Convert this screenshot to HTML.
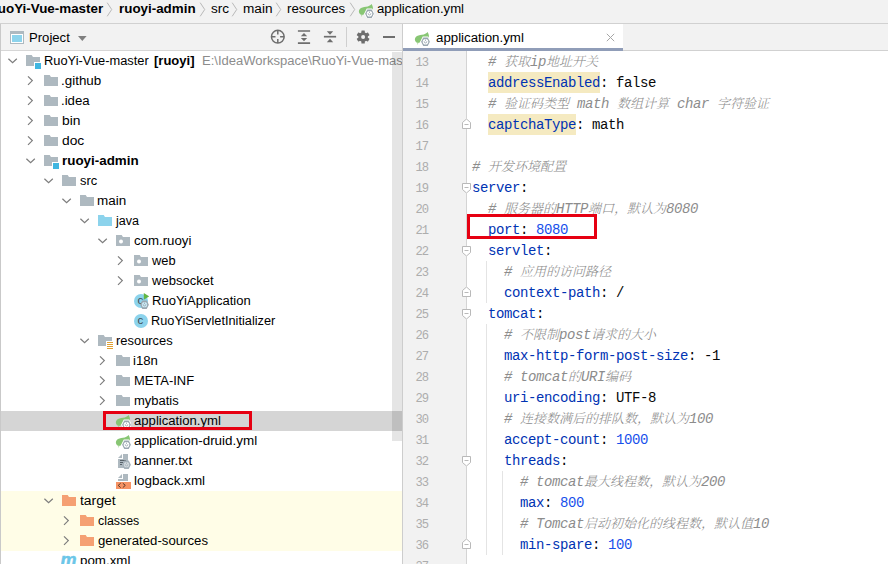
<!DOCTYPE html>
<html><head><meta charset="utf-8"><title>application.yml</title>
<style>
html,body{margin:0;padding:0;}
body{width:888px;height:564px;overflow:hidden;background:#fff;position:relative;font-family:"Liberation Sans", "Noto Sans CJK SC", sans-serif;font-size:12px;color:#000;}
#crumbs{position:absolute;left:0;top:0;width:888px;height:23px;background:#f2f2f2;border-bottom:1px solid #d1d1d1;}
#crumbs span.t{position:absolute;top:0;line-height:19px;white-space:nowrap;transform-origin:0 0;}
.bsep{position:absolute;top:0;}
#lborder{position:absolute;left:0;top:24px;width:1px;height:540px;background:#c9c9c9;}
#phead{position:absolute;left:1px;top:24px;width:401px;height:26px;background:#f2f2f2;border-bottom:1px solid #d6d6d6;}
#tree{position:absolute;left:0px;top:0;width:402px;height:564px;overflow:hidden;}
.row{position:absolute;left:0;width:402px;height:20px;line-height:20px;white-space:nowrap;}
.row .arr{position:absolute;top:0;}
.row .ico{position:absolute;top:2px;width:16px;height:16px;}
.row .ico svg{display:block;}
.row .lbl{position:absolute;top:0px;transform-origin:0 0;}
.path{color:#8c8c8c;}
#split{position:absolute;left:402px;top:24px;width:1px;height:540px;background:#cdcdcd;}
#thumb{position:absolute;left:392px;top:52px;width:10px;height:388.500px;background:rgba(0,0,0,.1);}
#tabs{position:absolute;left:403px;top:24px;width:485px;height:26px;background:#f2f2f2;border-bottom:1px solid #d1d1d1;}
#tab{position:absolute;left:403px;top:24px;width:220px;height:24px;background:#fff;border-bottom:3px solid #909db8;}
#gutter{position:absolute;left:403px;top:51px;width:63px;height:513px;background:#f2f2f2;border-right:1px solid #d4d4d4;}
#editor{position:absolute;left:0;top:0;width:888px;height:564px;font-family:"Liberation Mono", "Noto Serif CJK SC", monospace;font-size:14px;letter-spacing:-0.4px;-webkit-text-stroke-width:0;}
.ln{position:absolute;left:403px;width:25px;text-align:right;height:21px;line-height:21px;color:#adadad;letter-spacing:-1.100px;font-size:13.500px;transform:scaleX(.9);transform-origin:100% 50%;}
.cl{position:absolute;height:21px;line-height:21px;white-space:pre;color:#080808;}
.c{color:#8c8c8c;font-style:italic;}
.z{font-size:13px;font-weight:300;letter-spacing:0;}
.k{color:#0033b3;}
.hlb{position:absolute;height:21px;background:#f5eac1;}
.n{color:#1750eb;}
.guide{position:absolute;width:1px;background:#e4e4e4;}
.redbox{position:absolute;border:3px solid #e60012;box-sizing:border-box;}
</style></head><body>
<div id="crumbs">
<span class="t" style="right:784.8px;transform:scaleX(1.1152);transform-origin:100% 0;font-weight:bold">RuoYi-Vue-master</span><svg class="bsep" style="left:106px" width="8" height="24" viewBox="0 0 8 24"><path d="M1.200 2.700L5.700 9.500 1.200 16.300" fill="none" stroke="#b9b9b9" stroke-width="1"/></svg>
<span class="t" style="left:119px;transform:scaleX(1.1152);font-weight:bold;">ruoyi-admin</span><svg class="bsep" style="left:199px" width="8" height="24" viewBox="0 0 8 24"><path d="M1.200 2.700L5.700 9.500 1.200 16.300" fill="none" stroke="#b9b9b9" stroke-width="1"/></svg>
<span class="t" style="left:211px;transform:scaleX(1.1309);">src</span><svg class="bsep" style="left:231px" width="8" height="24" viewBox="0 0 8 24"><path d="M1.200 2.700L5.700 9.500 1.200 16.300" fill="none" stroke="#b9b9b9" stroke-width="1"/></svg>
<span class="t" style="left:243px;transform:scaleX(1.1341);">main</span><svg class="bsep" style="left:275px" width="8" height="24" viewBox="0 0 8 24"><path d="M1.200 2.700L5.700 9.500 1.200 16.300" fill="none" stroke="#b9b9b9" stroke-width="1"/></svg>
<span class="t" style="left:287px;transform:scaleX(1.1049);">resources</span><svg class="bsep" style="left:349px" width="8" height="24" viewBox="0 0 8 24"><path d="M1.200 2.700L5.700 9.500 1.200 16.300" fill="none" stroke="#b9b9b9" stroke-width="1"/></svg>
<span style="position:absolute;left:358px;top:2px"><svg width="16" height="16" viewBox="0 0 16 16"><path d="M13.600 1.900C12.400 3.400 10.500 4.300 8 4.700 5.500 5.100 3.200 5.400 1.800 7 .5 8.600.600 10.600 1.900 11.900c1.100 1.100 2.700 1.100 3.700.600C6.800 11.800 7 10.500 8 9.500h7v-3c0-2-.800-3.500-1.400-4.600z" fill="#88c674"/><path d="M4.700 12.300l-1 2.200-.8-.3 1-2.200z" fill="#88c674" opacity=".6"/><g><path d="M16.900 11.700l-2.650 5.100h-5.500L6.100 11.700l2.650-5.100h5.500z" fill="#fff"/><path d="M15.900 11.700l-2.200 4.200H9.300L7.100 11.700l2.200-4.200h4.400z" fill="#9aa7b0"/><circle cx="11.500" cy="11.700" r="2.800" fill="#fff"/><path d="M10.150 11.300a1.350 1.700 0 0 0 2.700 0M11.500 9.500v1.400" fill="none" stroke="#9aa7b0" stroke-width=".9"/></g></svg></span>
<span class="t" style="left:377px;transform:scaleX(1.0964);">application.yml</span>
</div>
<div id="tree">
<div class="row" style="top:51px;">
<svg class="arr" style="left:6.5px" width="12" height="20" viewBox="0 0 12 20"><path d="M1.400 7.700l4.200 4 4.200-4" fill="none" stroke="#7d7d7d" stroke-width="1.200"/></svg>
<span class="ico" style="left:25px"><svg width="16" height="16" viewBox="0 0 16 16"><path d="M1 2h5.700l1.280 2H15v5H9v4H1z" fill="#aeb9c0"/><rect x="10" y="10" width="6" height="6" fill="#40b6e0"/></svg></span>
<span class="lbl " style="left:44px;transform:scaleX(1.0708);">RuoYi-Vue-master</span>
<span class="lbl " style="left:154px;transform:scaleX(1.084);font-weight:bold;">[ruoyi]</span>
<span class="lbl path" style="left:201.6px;transform:scaleX(1.0859);">E:\IdeaWorkspace\RuoYi-Vue-mas</span>
</div>
<div class="row" style="top:71px;">
<svg class="arr" style="left:24.5px" width="12" height="20" viewBox="0 0 12 20"><path d="M3 5.300l4.300 4.300L3 13.900" fill="none" stroke="#7d7d7d" stroke-width="1.200"/></svg>
<span class="ico" style="left:43px"><svg width="16" height="16" viewBox="0 0 16 16"><path d="M1 2h5.700l1.280 2H15v9H1z" fill="#aeb9c0"/></svg></span>
<span class="lbl " style="left:61px;transform:scaleX(1.1173);">.github</span>
</div>
<div class="row" style="top:91px;">
<svg class="arr" style="left:24.5px" width="12" height="20" viewBox="0 0 12 20"><path d="M3 5.300l4.300 4.300L3 13.900" fill="none" stroke="#7d7d7d" stroke-width="1.200"/></svg>
<span class="ico" style="left:43px"><svg width="16" height="16" viewBox="0 0 16 16"><path d="M1 2h5.700l1.280 2H15v9H1z" fill="#aeb9c0"/></svg></span>
<span class="lbl " style="left:61px;transform:scaleX(1.1001);">.idea</span>
</div>
<div class="row" style="top:111px;">
<svg class="arr" style="left:24.5px" width="12" height="20" viewBox="0 0 12 20"><path d="M3 5.300l4.300 4.300L3 13.900" fill="none" stroke="#7d7d7d" stroke-width="1.200"/></svg>
<span class="ico" style="left:43px"><svg width="16" height="16" viewBox="0 0 16 16"><path d="M1 2h5.700l1.280 2H15v9H1z" fill="#aeb9c0"/></svg></span>
<span class="lbl " style="left:62px;transform:scaleX(1.1515);">bin</span>
</div>
<div class="row" style="top:131px;">
<svg class="arr" style="left:24.5px" width="12" height="20" viewBox="0 0 12 20"><path d="M3 5.300l4.300 4.300L3 13.900" fill="none" stroke="#7d7d7d" stroke-width="1.200"/></svg>
<span class="ico" style="left:43px"><svg width="16" height="16" viewBox="0 0 16 16"><path d="M1 2h5.700l1.280 2H15v9H1z" fill="#aeb9c0"/></svg></span>
<span class="lbl " style="left:62px;transform:scaleX(1.1507);">doc</span>
</div>
<div class="row" style="top:151px;">
<svg class="arr" style="left:24.5px" width="12" height="20" viewBox="0 0 12 20"><path d="M1.400 7.700l4.200 4 4.200-4" fill="none" stroke="#7d7d7d" stroke-width="1.200"/></svg>
<span class="ico" style="left:43px"><svg width="16" height="16" viewBox="0 0 16 16"><path d="M1 2h5.700l1.280 2H15v5H9v4H1z" fill="#aeb9c0"/><rect x="10" y="10" width="6" height="6" fill="#40b6e0"/></svg></span>
<span class="lbl " style="left:62px;transform:scaleX(1.1157);font-weight:bold;">ruoyi-admin</span>
</div>
<div class="row" style="top:171px;">
<svg class="arr" style="left:42.5px" width="12" height="20" viewBox="0 0 12 20"><path d="M1.400 7.700l4.200 4 4.200-4" fill="none" stroke="#7d7d7d" stroke-width="1.200"/></svg>
<span class="ico" style="left:61px"><svg width="16" height="16" viewBox="0 0 16 16"><path d="M1 2h5.700l1.280 2H15v9H1z" fill="#aeb9c0"/></svg></span>
<span class="lbl " style="left:80px;transform:scaleX(1.075);">src</span>
</div>
<div class="row" style="top:191px;">
<svg class="arr" style="left:60.5px" width="12" height="20" viewBox="0 0 12 20"><path d="M1.400 7.700l4.200 4 4.200-4" fill="none" stroke="#7d7d7d" stroke-width="1.200"/></svg>
<span class="ico" style="left:79px"><svg width="16" height="16" viewBox="0 0 16 16"><path d="M1 2h5.700l1.280 2H15v9H1z" fill="#aeb9c0"/></svg></span>
<span class="lbl " style="left:97px;transform:scaleX(1.1219);">main</span>
</div>
<div class="row" style="top:211px;">
<svg class="arr" style="left:78.5px" width="12" height="20" viewBox="0 0 12 20"><path d="M1.400 7.700l4.200 4 4.200-4" fill="none" stroke="#7d7d7d" stroke-width="1.200"/></svg>
<span class="ico" style="left:97px"><svg width="16" height="16" viewBox="0 0 16 16"><path d="M1 2h5.700l1.280 2H15v9H1z" fill="#8cd3ec"/></svg></span>
<span class="lbl " style="left:116px;transform:scaleX(1.0469);">java</span>
</div>
<div class="row" style="top:231px;">
<svg class="arr" style="left:96.5px" width="12" height="20" viewBox="0 0 12 20"><path d="M1.400 7.700l4.200 4 4.200-4" fill="none" stroke="#7d7d7d" stroke-width="1.200"/></svg>
<span class="ico" style="left:115px"><svg width="16" height="16" viewBox="0 0 16 16"><path d="M1 2h5.700l1.280 2H15v9H1z" fill="#aeb9c0"/><circle cx="6" cy="8.500" r="2" fill="#fff"/></svg></span>
<span class="lbl " style="left:134px;transform:scaleX(1.1031);">com.ruoyi</span>
</div>
<div class="row" style="top:251px;">
<svg class="arr" style="left:114.5px" width="12" height="20" viewBox="0 0 12 20"><path d="M3 5.300l4.300 4.300L3 13.900" fill="none" stroke="#7d7d7d" stroke-width="1.200"/></svg>
<span class="ico" style="left:133px"><svg width="16" height="16" viewBox="0 0 16 16"><path d="M1 2h5.700l1.280 2H15v9H1z" fill="#aeb9c0"/><circle cx="6" cy="8.500" r="2" fill="#fff"/></svg></span>
<span class="lbl " style="left:152px;transform:scaleX(1.0703);">web</span>
</div>
<div class="row" style="top:271px;">
<svg class="arr" style="left:114.5px" width="12" height="20" viewBox="0 0 12 20"><path d="M3 5.300l4.300 4.300L3 13.900" fill="none" stroke="#7d7d7d" stroke-width="1.200"/></svg>
<span class="ico" style="left:133px"><svg width="16" height="16" viewBox="0 0 16 16"><path d="M1 2h5.700l1.280 2H15v9H1z" fill="#aeb9c0"/><circle cx="6" cy="8.500" r="2" fill="#fff"/></svg></span>
<span class="lbl " style="left:152px;transform:scaleX(1.0855);">websocket</span>
</div>
<div class="row" style="top:291px;">
<span class="ico" style="left:133px"><svg width="16" height="16" viewBox="0 0 16 16"><circle cx="8" cy="8" r="7" fill="#8cd3ec"/><text x="7.4" y="11" font-family='"Liberation Sans", sans-serif' font-size="11.500" fill="#3f4a52" text-anchor="middle">c</text><path d="M10.800 0l5.300 3.400-5.300 3.400z" fill="#62b543"/><g><path d="M15.900 11.700l-2.200 4.200H9.300L7.100 11.700l2.200-4.200h4.400z" fill="#9aa7b0"/><circle cx="11.500" cy="11.700" r="2.650" fill="#c9eaf6"/><path d="M10.150 11.300a1.350 1.700 0 0 0 2.700 0M11.500 9.500v1.400" fill="none" stroke="#9aa7b0" stroke-width=".9"/></g></svg></span>
<span class="lbl " style="left:152px;transform:scaleX(1.0851);">RuoYiApplication</span>
</div>
<div class="row" style="top:311px;">
<span class="ico" style="left:133px"><svg width="16" height="16" viewBox="0 0 16 16"><circle cx="8" cy="8" r="7" fill="#8cd3ec"/><text x="7.4" y="11" font-family='"Liberation Sans", sans-serif' font-size="11.500" fill="#3f4a52" text-anchor="middle">c</text></svg></span>
<span class="lbl " style="left:151px;transform:scaleX(1.0626);">RuoYiServletInitializer</span>
</div>
<div class="row" style="top:331px;">
<svg class="arr" style="left:78.5px" width="12" height="20" viewBox="0 0 12 20"><path d="M1.400 7.700l4.200 4 4.200-4" fill="none" stroke="#7d7d7d" stroke-width="1.200"/></svg>
<span class="ico" style="left:97px"><svg width="16" height="16" viewBox="0 0 16 16"><path d="M1 2h5.700l1.280 2H15v4H9v5H1z" fill="#aeb9c0"/><g fill="#e0a135"><rect x="10" y="9" width="6" height="1"/><rect x="10" y="11" width="6" height="1"/><rect x="10" y="13" width="6" height="1"/><rect x="10" y="15" width="6" height="1"/></g></svg></span>
<span class="lbl " style="left:116px;transform:scaleX(1.0766);">resources</span>
</div>
<div class="row" style="top:351px;">
<svg class="arr" style="left:96.5px" width="12" height="20" viewBox="0 0 12 20"><path d="M3 5.300l4.300 4.300L3 13.900" fill="none" stroke="#7d7d7d" stroke-width="1.200"/></svg>
<span class="ico" style="left:115px"><svg width="16" height="16" viewBox="0 0 16 16"><path d="M1 2h5.700l1.280 2H15v9H1z" fill="#aeb9c0"/></svg></span>
<span class="lbl " style="left:133px;transform:scaleX(1.0982);">i18n</span>
</div>
<div class="row" style="top:371px;">
<svg class="arr" style="left:96.5px" width="12" height="20" viewBox="0 0 12 20"><path d="M3 5.300l4.300 4.300L3 13.900" fill="none" stroke="#7d7d7d" stroke-width="1.200"/></svg>
<span class="ico" style="left:115px"><svg width="16" height="16" viewBox="0 0 16 16"><path d="M1 2h5.700l1.280 2H15v9H1z" fill="#aeb9c0"/></svg></span>
<span class="lbl " style="left:134px;transform:scaleX(1.0774);">META-INF</span>
</div>
<div class="row" style="top:391px;">
<svg class="arr" style="left:96.5px" width="12" height="20" viewBox="0 0 12 20"><path d="M3 5.300l4.300 4.300L3 13.900" fill="none" stroke="#7d7d7d" stroke-width="1.200"/></svg>
<span class="ico" style="left:115px"><svg width="16" height="16" viewBox="0 0 16 16"><path d="M1 2h5.700l1.280 2H15v9H1z" fill="#aeb9c0"/></svg></span>
<span class="lbl " style="left:134px;transform:scaleX(1.0806);">mybatis</span>
</div>
<div class="row" style="top:411px;background:#d5d5d5;">
<span class="ico" style="left:115px"><svg width="16" height="16" viewBox="0 0 16 16"><path d="M13.600 1.900C12.400 3.400 10.500 4.300 8 4.700 5.500 5.100 3.200 5.400 1.800 7 .5 8.600.600 10.600 1.900 11.900c1.100 1.100 2.700 1.100 3.700.600C6.800 11.800 7 10.500 8 9.500h7v-3c0-2-.800-3.500-1.400-4.600z" fill="#88c674"/><path d="M4.700 12.300l-1 2.200-.8-.3 1-2.200z" fill="#88c674" opacity=".6"/><g><path d="M16.900 11.700l-2.650 5.100h-5.500L6.100 11.700l2.650-5.100h5.500z" fill="#fff"/><path d="M15.900 11.700l-2.200 4.200H9.300L7.100 11.700l2.200-4.200h4.400z" fill="#9aa7b0"/><circle cx="11.500" cy="11.700" r="2.800" fill="#fff"/><path d="M10.150 11.300a1.350 1.700 0 0 0 2.700 0M11.500 9.500v1.400" fill="none" stroke="#9aa7b0" stroke-width=".9"/></g></svg></span>
<span class="lbl " style="left:134px;transform:scaleX(1.0938);">application.yml</span>
</div>
<div class="row" style="top:431px;">
<span class="ico" style="left:115px"><svg width="16" height="16" viewBox="0 0 16 16"><path d="M13.600 1.900C12.400 3.400 10.500 4.300 8 4.700 5.500 5.100 3.200 5.400 1.800 7 .5 8.600.600 10.600 1.900 11.900c1.100 1.100 2.700 1.100 3.700.600C6.800 11.800 7 10.500 8 9.500h7v-3c0-2-.800-3.500-1.400-4.600z" fill="#88c674"/><path d="M4.700 12.300l-1 2.200-.8-.3 1-2.200z" fill="#88c674" opacity=".6"/><g><path d="M16.900 11.700l-2.650 5.100h-5.500L6.100 11.700l2.650-5.100h5.500z" fill="#fff"/><path d="M15.900 11.700l-2.200 4.200H9.300L7.100 11.700l2.200-4.200h4.400z" fill="#9aa7b0"/><circle cx="11.500" cy="11.700" r="2.800" fill="#fff"/><path d="M10.150 11.300a1.350 1.700 0 0 0 2.700 0M11.500 9.500v1.400" fill="none" stroke="#9aa7b0" stroke-width=".9"/></g></svg></span>
<span class="lbl " style="left:134px;transform:scaleX(1.1188);">application-druid.yml</span>
</div>
<div class="row" style="top:451px;">
<span class="ico" style="left:115px"><svg width="16" height="16" viewBox="0 0 16 16"><path d="M7 1L3 5h4z" fill="#aeb9c0"/><path d="M8 1h5v14H3V6h5z" fill="#aeb9c0"/><g fill="#59636a"><rect x="5" y="7" width="6" height="1"/><rect x="5" y="9" width="3" height="1"/><rect x="5" y="11" width="2" height="1"/></g><g><path d="M15.900 11.700l-2.200 4.200H9.300L7.100 11.700l2.200-4.200h4.400z" fill="#a4b0b8"/><circle cx="11.500" cy="11.700" r="2.650" fill="#d3dade"/><path d="M10.150 11.300a1.350 1.700 0 0 0 2.700 0M11.500 9.500v1.400" fill="none" stroke="#a4b0b8" stroke-width=".9"/></g></svg></span>
<span class="lbl " style="left:134px;transform:scaleX(1.103);">banner.txt</span>
</div>
<div class="row" style="top:471px;">
<span class="ico" style="left:115px"><svg width="16" height="16" viewBox="0 0 16 16"><path d="M7 1L3 5h4z" fill="#aeb9c0"/><path d="M8 1h5v7H3V6h5z" fill="#aeb9c0"/><rect x="1" y="9" width="15" height="7" fill="#f69364"/><path d="M5.700 10.200L3.200 12.400l2.500 2.200M7.800 10.200l2.500 2.200-2.500 2.200" fill="none" stroke="#5a3a2a" stroke-width="1"/></svg></span>
<span class="lbl " style="left:134px;transform:scaleX(1.1222);">logback.xml</span>
</div>
<div class="row" style="top:491px;background:#fffde7;">
<svg class="arr" style="left:42.5px" width="12" height="20" viewBox="0 0 12 20"><path d="M1.400 7.700l4.200 4 4.200-4" fill="none" stroke="#7d7d7d" stroke-width="1.200"/></svg>
<span class="ico" style="left:61px"><svg width="16" height="16" viewBox="0 0 16 16"><path d="M1 2h5.700l1.280 2H15v9H1z" fill="#f5a073"/></svg></span>
<span class="lbl " style="left:80px;transform:scaleX(1.1607);">target</span>
</div>
<div class="row" style="top:511px;background:#fffde7;">
<svg class="arr" style="left:60.5px" width="12" height="20" viewBox="0 0 12 20"><path d="M3 5.300l4.300 4.300L3 13.900" fill="none" stroke="#7d7d7d" stroke-width="1.200"/></svg>
<span class="ico" style="left:79px"><svg width="16" height="16" viewBox="0 0 16 16"><path d="M1 2h5.700l1.280 2H15v9H1z" fill="#f5a073"/></svg></span>
<span class="lbl " style="left:98px;transform:scaleX(1.0293);">classes</span>
</div>
<div class="row" style="top:531px;background:#fffde7;">
<svg class="arr" style="left:60.5px" width="12" height="20" viewBox="0 0 12 20"><path d="M3 5.300l4.300 4.300L3 13.900" fill="none" stroke="#7d7d7d" stroke-width="1.200"/></svg>
<span class="ico" style="left:79px"><svg width="16" height="16" viewBox="0 0 16 16"><path d="M1 2h5.700l1.280 2H15v9H1z" fill="#f5a073"/></svg></span>
<span class="lbl " style="left:98px;transform:scaleX(1.0999);">generated-sources</span>
</div>
<div class="row" style="top:551px;">
<span class="ico" style="left:61px"><svg width="16" height="16" viewBox="0 0 16 16"><text x="-0.500" y="12.500" font-family='"Liberation Sans", sans-serif' font-style="italic" font-weight="bold" font-size="18" fill="#6cc6e8" stroke="#6cc6e8" stroke-width="0.500" textLength="16" lengthAdjust="spacingAndGlyphs">m</text></svg></span>
<span class="lbl " style="left:80px;transform:scaleX(1.1113);">pom.xml</span>
</div>
</div>
<div id="thumb"></div>
<div id="split"></div>
<div id="lborder"></div>
<div id="phead">
<svg style="position:absolute;left:9px;top:7px" width="14" height="13" viewBox="0 0 14 13"><rect x="0" y="0" width="14" height="13" fill="#aeb9c0"/><rect x="1" y="3" width="12" height="9" fill="#fff"/><rect x="2" y="4" width="10" height="7" fill="#8cd3ec"/></svg>
<span style="position:absolute;left:28px;top:1px;line-height:26px;transform:scaleX(1.0931);transform-origin:0 0">Project</span>
<svg style="position:absolute;left:77px;top:12px" width="9" height="6" viewBox="0 0 9 6"><path d="M0 0h8.600L4.300 5z" fill="#7f7f7f"/></svg>

<svg style="position:absolute;left:268px;top:4px" width="18" height="18" viewBox="0 0 18 18"><circle cx="8.800" cy="8.700" r="6.350" fill="none" stroke="#6e6e6e" stroke-width="1.500"/><path d="M8.800 2.400v4M8.800 11v4M2.500 8.700h4M11.100 8.700h4" stroke="#6e6e6e" stroke-width="1.500" fill="none"/></svg>
<svg style="position:absolute;left:295px;top:4px" width="16" height="18" viewBox="0 0 16 18"><path d="M1.900 3h12.200M1.900 15.200h12.200" stroke="#6e6e6e" stroke-width="1.700" fill="none"/><path d="M8 5l3.200 3.300H4.800zM8 13.300l3.200-3.300H4.800z" fill="#6e6e6e"/></svg>
<svg style="position:absolute;left:321px;top:4px" width="16" height="18" viewBox="0 0 16 18"><path d="M1.900 8.700h12.200" stroke="#6e6e6e" stroke-width="1.700" fill="none"/><path d="M8 6.700l3.200-3.400H4.800zM8 10.800l3.200 3.400H4.800z" fill="#6e6e6e"/></svg>
<div style="position:absolute;left:345px;top:3px;width:1px;height:20px;background:#cfcfcf"></div>
<svg style="position:absolute;left:354px;top:5px" width="16" height="16" viewBox="0 0 16 16"><g transform="translate(8.100 8)"><g fill="#6e6e6e"><rect x="-1.700" y="-6.500" width="3.400" height="13" rx=".5"/><rect x="-1.700" y="-6.500" width="3.400" height="13" rx=".5" transform="rotate(60)"/><rect x="-1.700" y="-6.500" width="3.400" height="13" rx=".5" transform="rotate(120)"/><circle r="4.800"/></g><circle r="2" fill="#f2f2f2"/></g></svg>
<div style="position:absolute;left:382px;top:12px;width:12px;height:1.500px;background:#6e6e6e"></div>

</div>
<div id="tabs"></div>
<div id="tab">
<span style="position:absolute;left:11px;top:6px"><svg width="16" height="16" viewBox="0 0 16 16"><path d="M13.600 1.900C12.400 3.400 10.500 4.300 8 4.700 5.500 5.100 3.200 5.400 1.800 7 .5 8.600.600 10.600 1.900 11.900c1.100 1.100 2.700 1.100 3.700.600C6.800 11.800 7 10.500 8 9.500h7v-3c0-2-.800-3.500-1.400-4.600z" fill="#88c674"/><path d="M4.700 12.300l-1 2.200-.8-.3 1-2.200z" fill="#88c674" opacity=".6"/><g><path d="M16.900 11.700l-2.650 5.100h-5.500L6.100 11.700l2.650-5.100h5.500z" fill="#fff"/><path d="M15.900 11.700l-2.200 4.200H9.300L7.100 11.700l2.200-4.200h4.400z" fill="#9aa7b0"/><circle cx="11.500" cy="11.700" r="2.800" fill="#fff"/><path d="M10.150 11.300a1.350 1.700 0 0 0 2.700 0M11.500 9.500v1.400" fill="none" stroke="#9aa7b0" stroke-width=".9"/></g></svg></span>
<span style="position:absolute;left:33px;top:1px;line-height:26px;transform:scaleX(1.1067);transform-origin:0 0">application.yml</span>
<svg style="position:absolute;left:203px;top:9px" width="9" height="9" viewBox="0 0 9 9"><path d="M0.800 0.800l7.400 7.400M8.200 0.800l-7.400 7.400" stroke="#a6a6a6" stroke-width="1" fill="none"/></svg>
</div>
<div id="gutter"></div>
<div class="guide" style="left:486px;top:261px;height:42px"></div><div class="guide" style="left:486px;top:324px;height:231px"></div><div class="guide" style="left:502px;top:471px;height:84px"></div>
<svg style="position:absolute;left:462px;top:119px" width="9" height="10" viewBox="0 0 9 10"><path d="M0.500 9.500h8v-6l-4-3.500-4 3.500z" fill="#fff" stroke="#b9b9b9"/><path d="M2.500 5.500h4" stroke="#b9b9b9" fill="none"/></svg><svg style="position:absolute;left:462px;top:183px" width="9" height="10" viewBox="0 0 9 10"><path d="M0.500 0.500h8v6l-4 3.500-4-3.500z" fill="#fff" stroke="#b9b9b9"/><path d="M2.500 4.500h4" stroke="#b9b9b9" fill="none"/></svg><svg style="position:absolute;left:462px;top:246px" width="9" height="10" viewBox="0 0 9 10"><path d="M0.500 0.500h8v6l-4 3.500-4-3.500z" fill="#fff" stroke="#b9b9b9"/><path d="M2.500 4.500h4" stroke="#b9b9b9" fill="none"/></svg><svg style="position:absolute;left:462px;top:287px" width="9" height="10" viewBox="0 0 9 10"><path d="M0.500 9.500h8v-6l-4-3.500-4 3.500z" fill="#fff" stroke="#b9b9b9"/><path d="M2.500 5.500h4" stroke="#b9b9b9" fill="none"/></svg><svg style="position:absolute;left:462px;top:309px" width="9" height="10" viewBox="0 0 9 10"><path d="M0.500 0.500h8v6l-4 3.500-4-3.500z" fill="#fff" stroke="#b9b9b9"/><path d="M2.500 4.500h4" stroke="#b9b9b9" fill="none"/></svg><svg style="position:absolute;left:462px;top:456px" width="9" height="10" viewBox="0 0 9 10"><path d="M0.500 0.500h8v6l-4 3.500-4-3.500z" fill="#fff" stroke="#b9b9b9"/><path d="M2.500 4.500h4" stroke="#b9b9b9" fill="none"/></svg><svg style="position:absolute;left:462px;top:539px" width="9" height="10" viewBox="0 0 9 10"><path d="M0.500 9.500h8v-6l-4-3.500-4 3.500z" fill="#fff" stroke="#b9b9b9"/><path d="M2.500 5.500h4" stroke="#b9b9b9" fill="none"/></svg>
<div class="hlb" style="left:488px;top:72px;width:112px"></div><div class="hlb" style="left:488px;top:114px;width:88px"></div>
<div id="editor">
<div class="ln" style="top:52px">13</div>
<div class="cl" style="top:51.5px;left:488px"><span class="c"># <span class="z">获取</span>ip<span class="z">地址开关</span></span></div>
<div class="ln" style="top:73px">14</div>
<div class="cl" style="top:72.5px;left:488px"><span class="k">addressEnabled</span>: false</div>
<div class="ln" style="top:94px">15</div>
<div class="cl" style="top:93.5px;left:488px"><span class="c"># <span class="z">验证码类型</span> math <span class="z">数组计算</span> char <span class="z">字符验证</span></span></div>
<div class="ln" style="top:115px">16</div>
<div class="cl" style="top:114.5px;left:488px"><span class="k">captchaType</span>: math</div>
<div class="ln" style="top:136px">17</div>
<div class="ln" style="top:157px">18</div>
<div class="cl" style="top:156.5px;left:472px"><span class="c"># <span class="z">开发环境配置</span></span></div>
<div class="ln" style="top:178px">19</div>
<div class="cl" style="top:177.5px;left:472px"><span class="k">server</span>:</div>
<div class="ln" style="top:199px">20</div>
<div class="cl" style="top:198.5px;left:488px"><span class="c"># <span class="z">服务器的</span>HTTP<span class="z">端口，默认为</span>8080</span></div>
<div class="ln" style="top:220px">21</div>
<div class="cl" style="top:219.5px;left:488px"><span class="k">port</span>: <span class="n">8080</span></div>
<div class="ln" style="top:241px">22</div>
<div class="cl" style="top:240.5px;left:488px"><span class="k">servlet</span>:</div>
<div class="ln" style="top:262px">23</div>
<div class="cl" style="top:261.5px;left:504px"><span class="c"># <span class="z">应用的访问路径</span></span></div>
<div class="ln" style="top:283px">24</div>
<div class="cl" style="top:282.5px;left:504px"><span class="k">context-path</span>: /</div>
<div class="ln" style="top:304px">25</div>
<div class="cl" style="top:303.5px;left:488px"><span class="k">tomcat</span>:</div>
<div class="ln" style="top:325px">26</div>
<div class="cl" style="top:324.5px;left:504px"><span class="c"># <span class="z">不限制</span>post<span class="z">请求的大小</span></span></div>
<div class="ln" style="top:346px">27</div>
<div class="cl" style="top:345.5px;left:504px"><span class="k">max-http-form-post-size</span>: -1</div>
<div class="ln" style="top:367px">28</div>
<div class="cl" style="top:366.5px;left:504px"><span class="c"># tomcat<span class="z">的</span>URI<span class="z">编码</span></span></div>
<div class="ln" style="top:388px">29</div>
<div class="cl" style="top:387.5px;left:504px"><span class="k">uri-encoding</span>: UTF-8</div>
<div class="ln" style="top:409px">30</div>
<div class="cl" style="top:408.5px;left:504px"><span class="c"># <span class="z">连接数满后的排队数，默认为</span>100</span></div>
<div class="ln" style="top:430px">31</div>
<div class="cl" style="top:429.5px;left:504px"><span class="k">accept-count</span>: <span class="n">1000</span></div>
<div class="ln" style="top:451px">32</div>
<div class="cl" style="top:450.5px;left:504px"><span class="k">threads</span>:</div>
<div class="ln" style="top:472px">33</div>
<div class="cl" style="top:471.5px;left:520px"><span class="c"># tomcat<span class="z">最大线程数，默认为</span>200</span></div>
<div class="ln" style="top:493px">34</div>
<div class="cl" style="top:492.5px;left:520px"><span class="k">max</span>: <span class="n">800</span></div>
<div class="ln" style="top:514px">35</div>
<div class="cl" style="top:513.5px;left:520px"><span class="c"># Tomcat<span class="z">启动初始化的线程数，默认值</span>10</span></div>
<div class="ln" style="top:535px">36</div>
<div class="cl" style="top:534.5px;left:520px"><span class="k">min-spare</span>: <span class="n">100</span></div>
<div class="ln" style="top:556px">37</div>
</div>
<div class="redbox" style="left:103px;top:411px;width:149px;height:19px"></div>
<div class="redbox" style="left:467px;top:214px;width:130px;height:25px"></div>
</body></html>
